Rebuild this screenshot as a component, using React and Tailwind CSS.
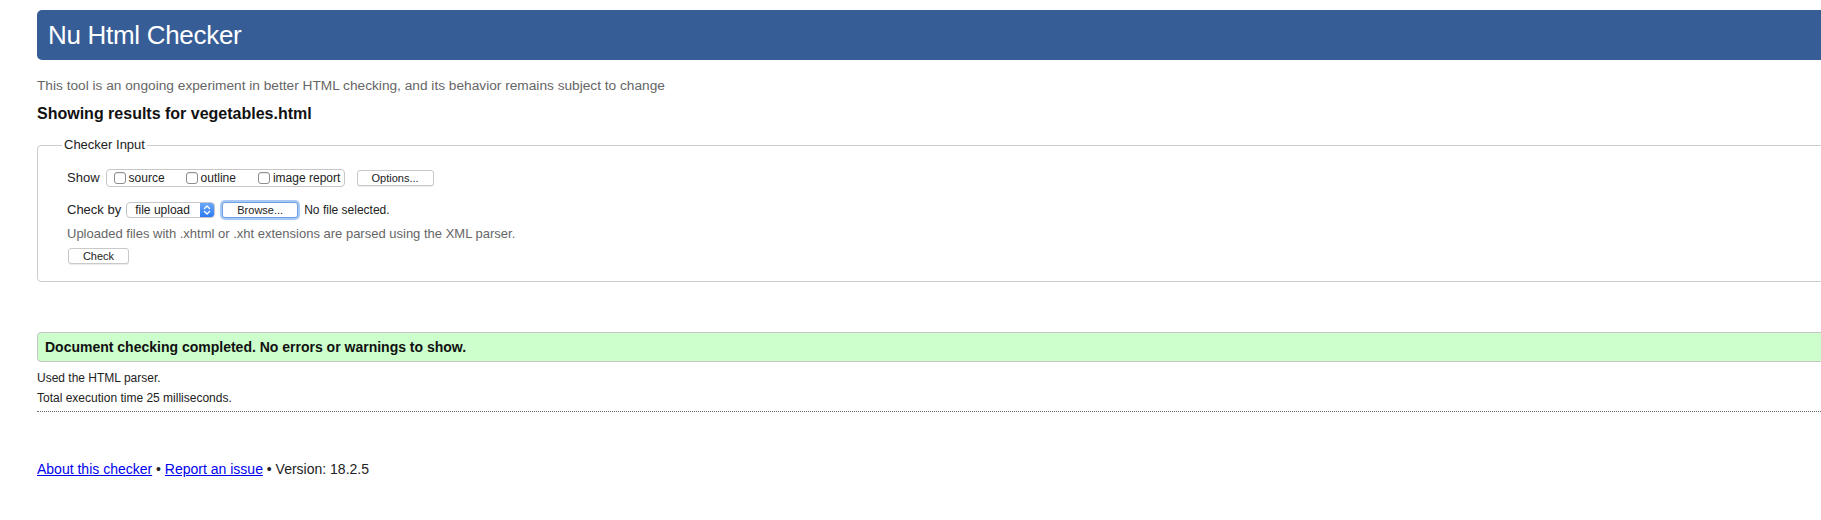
import React from "react";

const font = { fontFamily: '"Liberation Sans", Arial, sans-serif' };

function Box({ label, className = "" }) {
  return (
    <label className={`flex items-center ${className}`}>
      <span className="w-[12px] h-[12px] rounded-[3px] border border-[#8e8e8e] bg-white shadow-[inset_0_1px_1px_rgba(0,0,0,0.08)]" />
      <span className="ml-[3px] text-[12px] leading-[14px] text-[#222]">{label}</span>
    </label>
  );
}

function SmallButton({ children, className = "" }) {
  return (
    <button
      className={`h-[16px] flex items-center justify-center rounded-[3px] border border-[#c9c9c9] bg-white text-[11px] leading-[14px] text-[#222] shadow-[0_1px_0_rgba(0,0,0,0.08)] ${className}`}
    >
      {children}
    </button>
  );
}

export default function App() {
  return (
    <div className="min-h-[520px] bg-white overflow-hidden pl-[37px] pt-[10px]" style={font}>
      <header className="-mr-4 h-[50px] flex items-center rounded-l-[5px] bg-[#365d95] pl-[11px]">
        <h1 className="text-[26px] leading-[30px] text-white tracking-[-0.3px]">Nu Html Checker</h1>
      </header>

      <p className="mt-[18px] text-[13.7px] leading-[16px] text-[#666]">
        This tool is an ongoing experiment in better HTML checking, and its behavior remains subject to change
      </p>
      <h2 className="mt-[11px] text-[16px] leading-[18px] font-bold text-[#111]">Showing results for vegetables.html</h2>

      <fieldset className="-mr-4 mt-[14px] rounded-l-[4px] border border-[#cdcdcd] pl-[24px] pb-[17px]">
        <legend className="px-[2px] text-[13px] leading-[16px] text-[#222]">Checker Input</legend>
        <div className="pl-[5px] pt-[16px] text-[13px] text-[#222]">
          <div className="flex items-center h-[18px]">
            <span className="leading-[16px]">Show</span>
            <div className="ml-[6px] w-[239px] h-[18px] flex items-center rounded-[4px] border border-[#c6c6c6] pl-[7px]">
              <Box label="source" />
              <Box label="outline" className="ml-[21px]" />
              <Box label="image report" className="ml-[22px]" />
            </div>
            <SmallButton className="ml-[12px] w-[77px]">Options...</SmallButton>
          </div>

          <div className="mt-[14px] flex items-center h-[18px]">
            <span className="leading-[16px]">Check by</span>
            <div className="ml-[5px] w-[89px] h-[16px] flex items-stretch rounded-[4px] border border-[#c6c6c6] bg-white overflow-hidden">
              <span className="flex-1 pl-[8px] text-[12px] leading-[14px] text-[#222]">file upload</span>
              <span className="w-[14px] flex items-center justify-center bg-gradient-to-b from-[#6aa8fa] to-[#2d7bf2]">
                <svg width="8" height="12" viewBox="0 0 8 12" fill="none" stroke="white" strokeWidth="1.4" strokeLinecap="round" strokeLinejoin="round">
                  <path d="M1.5 4.5 L4 2 L6.5 4.5" />
                  <path d="M1.5 7.5 L4 10 L6.5 7.5" />
                </svg>
              </span>
            </div>
            <button className="ml-[7px] w-[76px] h-[16px] flex items-center justify-center rounded-[3px] border border-[#6f9fe3] bg-white text-[11px] leading-[14px] text-[#222] shadow-[0_0_0_2px_#a9c9f4]">
              Browse...
            </button>
            <span className="ml-[6px] text-[12px] leading-[14px] text-[#222]">No file selected.</span>
          </div>

          <p className="mt-[7px] text-[13px] leading-[16px] text-[#666]">
            Uploaded files with .xhtml or .xht extensions are parsed using the XML parser.
          </p>
          <SmallButton className="mt-[6px] ml-[1px] w-[61px]">Check</SmallButton>
        </div>
      </fieldset>

      <div className="-mr-4 mt-[50px] h-[30px] flex items-center rounded-l-[4px] border border-[#c4c4c4] bg-[#ccffcc] pl-[7px]">
        <p className="text-[14px] leading-[16px] font-bold text-[#111]">
          Document checking completed. No errors or warnings to show.
        </p>
      </div>

      <p className="mt-[9px] text-[12px] leading-[14px] text-[#222]">Used the HTML parser.</p>
      <p className="mt-[6px] text-[12px] leading-[14px] text-[#222]">Total execution time 25 milliseconds.</p>
      <div className="mt-[6px] border-b border-dotted border-[#666]" />

      <p className="mt-[49px] text-[14px] leading-[16px] text-[#222]">
        <a href="#" className="text-[#0000ee] underline">About this checker</a>
        {" • "}
        <a href="#" className="text-[#0000ee] underline">Report an issue</a>
        {" • Version: 18.2.5"}
      </p>
    </div>
  );
}
